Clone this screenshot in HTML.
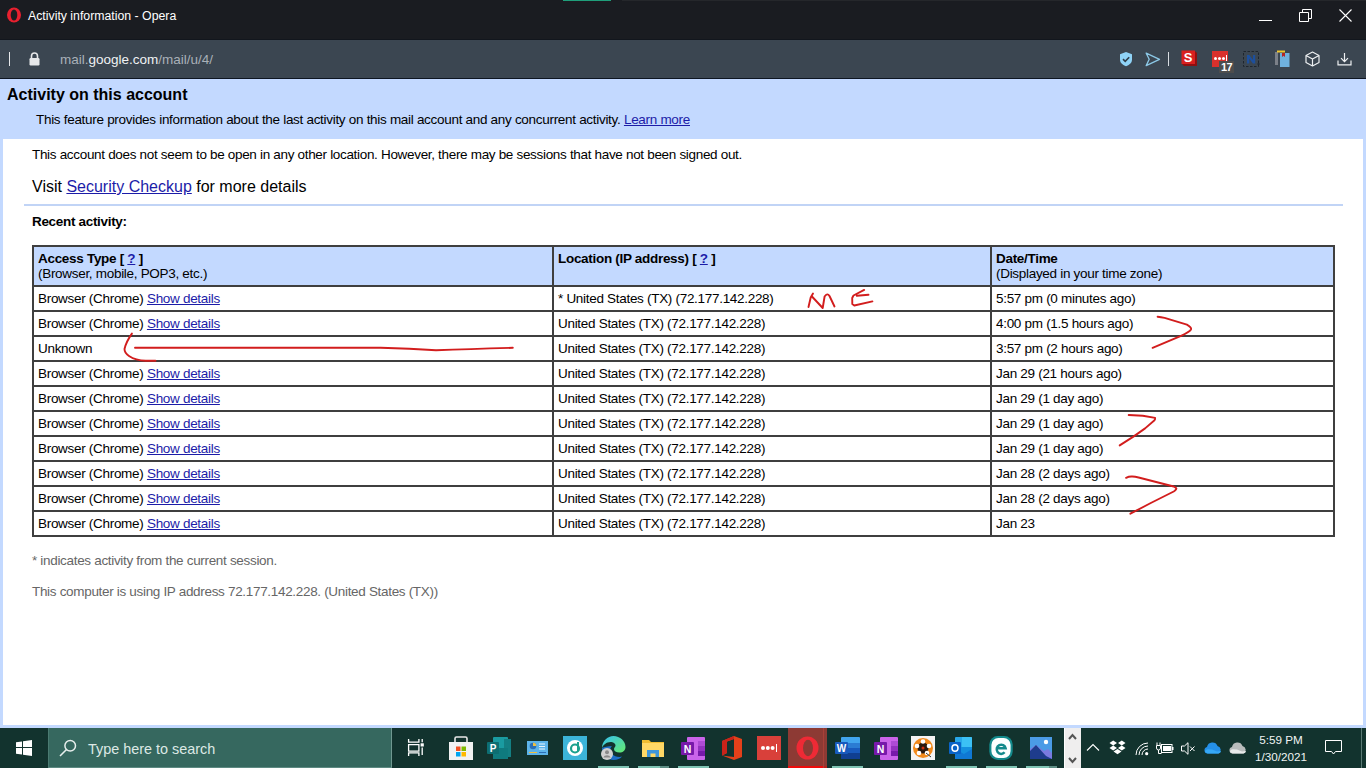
<!DOCTYPE html>
<html><head><meta charset="utf-8">
<style>
*{margin:0;padding:0;box-sizing:border-box}
html,body{width:1366px;height:768px;overflow:hidden;background:#c3d9ff;font-family:"Liberation Sans",sans-serif;position:relative}
.abs{position:absolute}
#title{left:0;top:0;width:1366px;height:40px;background:#1a1c21}
#title .t{left:28px;top:9px;font-size:12.3px;color:#fff;white-space:nowrap}
#tb{left:0;top:39px;width:1366px;height:40px;background:#3b4651;border-top:1px solid #12161d;border-bottom:1px solid #0e1622}
#url{left:60px;top:12px;font-size:13.5px;color:#a9b0b8;white-space:nowrap}
#url b{font-weight:normal;color:#f0f2f4}
#page{left:0;top:79px;width:1366px;height:649px;background:#c3d9ff}
#h1{left:7px;top:7px;font-size:16px;font-weight:bold;color:#000;white-space:nowrap}
#feat{left:36px;top:33px;font-size:13.5px;color:#000;letter-spacing:-0.30px;white-space:nowrap}
a{color:#1c1ca8;text-decoration:underline}
#white{left:3px;top:60px;width:1360px;height:586px;background:#fff}
.txt13{font-size:13.5px;letter-spacing:-0.32px;white-space:nowrap;color:#000}
#hr{left:21px;top:65px;width:1319px;height:2px;background:#c1d4f6}
table{position:absolute;left:29px;top:106px;width:1303px;border-collapse:collapse;font-size:13.5px;letter-spacing:-0.3px}
td,th{border:2px solid #3f3f3f;padding:0 4px;text-align:left;vertical-align:top;white-space:nowrap}
th{background:#c3d9ff;font-weight:normal;height:40px;padding-top:4px;line-height:15px}
td{height:25px;line-height:23px}
#taskbar{left:0;top:728px;width:1366px;height:40px;background:#12332e}
</style></head><body>
<div id="title" class="abs">
  <svg class="abs" style="left:6px;top:7px" width="16" height="16" viewBox="0 0 16 16"><ellipse cx="8" cy="8" rx="7" ry="7.6" fill="#e8202f"/><ellipse cx="8" cy="8" rx="3.3" ry="5.6" fill="#1b1d21"/></svg>
  <div class="abs t">Activity information - Opera</div>
  <div class="abs" style="left:563px;top:0;width:48px;height:1px;background:#1f9e7a"></div>
  <div class="abs" style="left:622px;top:0;width:744px;height:1px;background:#25272b"></div>
  <div class="abs" style="left:1259px;top:20px;width:13px;height:1px;background:#fff"></div>
  <svg class="abs" style="left:1299px;top:9px" width="14" height="13" viewBox="0 0 14 13"><path d="M0.5 3.5h9v9h-9z M3.5 3.5v-3h9v9h-3" fill="none" stroke="#fff" stroke-width="1"/></svg>
  <svg class="abs" style="left:1339px;top:9px" width="13" height="13" viewBox="0 0 13 13"><path d="M0.5 0.5L12.5 12.5M12.5 0.5L0.5 12.5" stroke="#fff" stroke-width="1.1"/></svg>
</div>
<div id="tb" class="abs">
  <div class="abs" style="left:9px;top:12px;width:1px;height:14px;background:#e6e8ea"></div>
  <svg class="abs" style="left:29px;top:12px" width="11" height="14" viewBox="0 0 11 14"><path d="M2.5 6.5V4a3 3 0 0 1 6 0v2.5" fill="none" stroke="#e6e8ea" stroke-width="1.6"/><rect x="0.5" y="6" width="10" height="7.5" rx="1.2" fill="#e6e8ea"/></svg>
  <svg class="abs" style="left:1119px;top:11px" width="14" height="16" viewBox="0 0 14 16"><path d="M7 1L13 3.2V8.5C13 12 10 14.3 7 15.2 4 14.3 1 12 1 8.5V3.2Z" fill="#8fd3f7"/><path d="M4 8.2L6.2 10.3 10.2 6.2" fill="none" stroke="#2f3e4a" stroke-width="1.6"/></svg>
  <svg class="abs" style="left:1145px;top:12px" width="16" height="15" viewBox="0 0 16 15"><path d="M1.2 1.2L14.5 7.3 1.2 13.6 4.2 7.3Z" fill="none" stroke="#8cc8e6" stroke-width="1.3" stroke-linejoin="round"/></svg>
  <div class="abs" style="left:1168px;top:12px;width:1px;height:14px;background:#d8dde2"></div>
  <svg class="abs" style="left:1181px;top:10px" width="17" height="17" viewBox="0 0 17 17"><path d="M1 1h13l2 2v13H3l-2-2z" fill="#8e1010"/><rect x="0.5" y="0.5" width="13.5" height="13.5" fill="#d9201f"/><text x="7.2" y="12" font-family="Liberation Sans" font-weight="bold" font-size="13" fill="#fff" text-anchor="middle">S</text></svg>
  <div class="abs" style="left:1212px;top:11px;width:16px;height:16px;background:#d9302c"></div>
  <div class="abs" style="left:1214px;top:17px;width:3px;height:3px;border-radius:50%;background:#fff;box-shadow:4px 0 0 #fff,8px 0 0 #fff"></div>
  <div class="abs" style="left:1226px;top:15px;width:1px;height:6px;background:#fff"></div>
  <div class="abs" style="left:1219px;top:21px;width:15px;height:12px;background:#4d4d4d;color:#fff;font-size:11px;font-weight:bold;line-height:12px;text-align:center;letter-spacing:-0.5px">17</div>
  <svg class="abs" style="left:1243px;top:11px" width="17" height="16" viewBox="0 0 17 16"><rect x="0.5" y="0.5" width="15" height="15" fill="none" stroke="#1e252d" stroke-width="1" stroke-dasharray="2.5 1.5"/><path d="M4 12.5V4h2.3l3.7 5V4h2.2v8.5H9.9L6.2 7.5V12.5z" fill="#1d4f9c"/><path d="M14 13h3M15.5 11.5v3" stroke="#222a33" stroke-width="0.8"/></svg>
  <svg class="abs" style="left:1275px;top:10px" width="15" height="17" viewBox="0 0 15 17"><rect x="0" y="2" width="3" height="13" fill="#7b8088"/><rect x="2" y="0.5" width="8" height="2" fill="#f0c630"/><rect x="5" y="3" width="9.5" height="14" fill="#6fb1de"/><path d="M7 3h3v4l-1.5-1.2L7 7z" fill="#b52424"/></svg>
  <svg class="abs" style="left:1305px;top:11px" width="15" height="16" viewBox="0 0 15 16"><path d="M7.5 1L14 4.5V11.5L7.5 15 1 11.5V4.5Z M1 4.5L7.5 8 14 4.5 M7.5 8V15" fill="none" stroke="#eef0f2" stroke-width="1.2" stroke-linejoin="round"/></svg>
  <svg class="abs" style="left:1337px;top:13px" width="15" height="13" viewBox="0 0 15 13"><path d="M7.5 0V8.5M4 5.2L7.5 8.7 11 5.2M1 7.5V11.9H14V7.5" fill="none" stroke="#eef0f2" stroke-width="1.2"/></svg>
  <div id="url" class="abs">mail.<b>google.com</b>/mail/u/4/</div>
</div>
<div id="page" class="abs">
  <div id="h1" class="abs">Activity on this account</div>
  <div id="feat" class="abs">This feature provides information about the last activity on this mail account and any concurrent activity. <a>Learn more</a></div>
  <div id="white" class="abs">
    <div class="abs txt13" style="left:29px;top:8px">This account does not seem to be open in any other location. However, there may be sessions that have not been signed out.</div>
    <div class="abs" style="left:29px;top:39px;font-size:16px;white-space:nowrap">Visit <a>Security Checkup</a> for more details</div>
    <div id="hr" class="abs"></div>
    <div class="abs txt13" style="left:29px;top:75px;font-weight:bold">Recent activity:</div>
    <table>
      <tr><th style="width:520px"><b>Access Type [ <a>?</a> ]</b><br>(Browser, mobile, POP3, etc.)</th><th style="width:438px"><b>Location (IP address) [ <a>?</a> ]</b></th><th><b>Date/Time</b><br>(Displayed in your time zone)</th></tr>
      <tr><td>Browser (Chrome) <a>Show details</a></td><td>* United States (TX) (72.177.142.228)</td><td>5:57 pm (0 minutes ago)</td></tr>
      <tr><td>Browser (Chrome) <a>Show details</a></td><td>United States (TX) (72.177.142.228)</td><td>4:00 pm (1.5 hours ago)</td></tr>
      <tr><td>Unknown</td><td>United States (TX) (72.177.142.228)</td><td>3:57 pm (2 hours ago)</td></tr>
      <tr><td>Browser (Chrome) <a>Show details</a></td><td>United States (TX) (72.177.142.228)</td><td>Jan 29 (21 hours ago)</td></tr>
      <tr><td>Browser (Chrome) <a>Show details</a></td><td>United States (TX) (72.177.142.228)</td><td>Jan 29 (1 day ago)</td></tr>
      <tr><td>Browser (Chrome) <a>Show details</a></td><td>United States (TX) (72.177.142.228)</td><td>Jan 29 (1 day ago)</td></tr>
      <tr><td>Browser (Chrome) <a>Show details</a></td><td>United States (TX) (72.177.142.228)</td><td>Jan 29 (1 day ago)</td></tr>
      <tr><td>Browser (Chrome) <a>Show details</a></td><td>United States (TX) (72.177.142.228)</td><td>Jan 28 (2 days ago)</td></tr>
      <tr><td>Browser (Chrome) <a>Show details</a></td><td>United States (TX) (72.177.142.228)</td><td>Jan 28 (2 days ago)</td></tr>
      <tr><td>Browser (Chrome) <a>Show details</a></td><td>United States (TX) (72.177.142.228)</td><td>Jan 23</td></tr>
    </table>
    <div class="abs txt13" style="left:29px;top:414px;color:#666">* indicates activity from the current session.</div>
    <div class="abs txt13" style="left:29px;top:445px;color:#666">This computer is using IP address 72.177.142.228. (United States (TX))</div>
  </div>
</div>
<svg class="abs" style="left:0;top:0;pointer-events:none" width="1366" height="768" viewBox="0 0 1366 768">
<g fill="none" stroke="#d21d1d" stroke-width="1.9" stroke-linecap="round" stroke-linejoin="round">
<path d="M808.5 307L810.7 297.5 813 293.5 M811.5 296L822.7 308 M822.7 308L824.6 296.5Q827.3 292.5 829.5 296L834.5 306.5"/>
<path d="M864.2 289.9L853.5 295.5 852.2 298 852.3 304 854.3 305.5 872.4 301.4 M856.9 295.8L868.5 294.8"/>
<path d="M131.9 333.6Q126 342 124.5 349 124.5 353 129 356 135.5 360.5 145.8 360.8L155.5 360.8"/>
<path d="M135 347.8L380.6 347.8Q410 348.5 436 350.3 470 349 512.8 347.8"/>
<path d="M1157.6 316.7Q1161 317.3 1164.6 317.9L1186.9 324.6Q1192 327.5 1191 329.5 1189.5 332 1181 335.8L1152.6 347.8"/>
<path d="M1128.7 415L1142.8 415.8 1155.1 417.9Q1155.3 419.5 1154.5 420.2L1145.1 428.4 1133.4 436.6 1119.7 445.4"/>
<path d="M1126.1 477.8Q1129 476.3 1132.2 476.5 1135 476.7 1138.6 477.5L1173.7 486.5Q1177 488 1176.2 489 1175.5 490.5 1173.7 491.5L1150.8 503 1130.4 513.7"/>
</g></svg>
<div id="taskbar" class="abs">
  <svg class="abs" style="left:16px;top:12px" width="16" height="16" viewBox="0 0 16 16"><path d="M0 2.3L6 1.4V7H0Z M7 1.2L16 0V7H7Z M0 8H6V14.6L0 13.7Z M7 8H16V16L7 14.8Z" fill="#fff"/></svg>
  <div class="abs" style="left:48px;top:0;width:344px;height:40px;background:#36685f;border-right:1px solid #6f9890;border-left:1px solid #4a7a71;border-bottom:1px solid #5d8a82"></div>
  <svg class="abs" style="left:59px;top:11px" width="18" height="18" viewBox="0 0 18 18"><circle cx="11.2" cy="6.8" r="5.3" fill="none" stroke="#e8efed" stroke-width="1.5"/><path d="M7.5 10.5L1 17" stroke="#e8efed" stroke-width="1.6"/></svg>
  <div class="abs" style="left:88px;top:12.5px;font-size:14.4px;color:#dde8e5;white-space:nowrap">Type here to search</div>
  <svg class="abs" style="left:407px;top:11px" width="18" height="17" viewBox="0 0 18 17"><path d="M1.6 0v3.2h10.3V0 M1.6 5.6h10.3v6.6H1.6z M1.6 17v-3.2h10.3V17 M15.2 0v3.2 M15.2 8.6V16" fill="none" stroke="#fff" stroke-width="1.3"/><rect x="13.6" y="4.3" width="3.2" height="3.2" fill="#fff"/></svg>
  <!-- store -->
  <svg class="abs" style="left:449px;top:8px" width="24" height="24" viewBox="0 0 24 24"><path d="M6 6V2.5Q6 1 7.5 1h9Q18 1 18 2.5V6" fill="none" stroke="#e8e8e8" stroke-width="1.6"/><rect x="0" y="6" width="24" height="18" fill="#f2f2f2"/><rect x="7" y="10.5" width="4.5" height="4.5" fill="#f25022"/><rect x="12.5" y="10.5" width="4.5" height="4.5" fill="#7fba00"/><rect x="7" y="16" width="4.5" height="4.5" fill="#00a4ef"/><rect x="12.5" y="16" width="4.5" height="4.5" fill="#ffb900"/></svg>
  <!-- publisher -->
  <svg class="abs" style="left:487px;top:9px" width="24" height="22" viewBox="0 0 24 22"><rect x="6" y="0" width="15" height="22" rx="1" fill="#1a9ba1"/><rect x="17" y="2" width="7" height="18" fill="#137f83"/><rect x="6" y="11" width="15" height="11" fill="#0f7a7e"/><rect x="0" y="5" width="12" height="12" rx="1" fill="#0d6e72"/><text x="6" y="15" font-family="Liberation Sans" font-weight="bold" font-size="10" fill="#fff" text-anchor="middle">P</text></svg>
  <!-- dashboard -->
  <svg class="abs" style="left:527px;top:13px" width="21" height="14" viewBox="0 0 21 14"><rect x="0" y="0" width="21" height="14" fill="#5db4ea"/><circle cx="6" cy="5" r="3.3" fill="#2c6fb5"/><path d="M6 5V1.7A3.3 3.3 0 0 1 9.3 5z" fill="#f0c040"/><path d="M12 3h6M12 5.5h6M12 8h6" stroke="#e8f4fc" stroke-width="1.2"/><path d="M2 11.5h8" stroke="#f0c040" stroke-width="1"/><path d="M12 11.5h7" stroke="#2c6fb5" stroke-width="1"/></svg>
  <!-- cyan app -->
  <svg class="abs" style="left:563px;top:8px" width="24" height="24" viewBox="0 0 24 24"><rect width="24" height="24" fill="#3cb4d9"/><circle cx="12" cy="12" r="8" fill="#fff"/><circle cx="12" cy="12.5" r="4" fill="none" stroke="#1aa08e" stroke-width="2.2"/><path d="M15 6v9" stroke="#1aa08e" stroke-width="2"/></svg>
  <!-- edge -->
  <svg class="abs" style="left:601px;top:8px" width="25" height="24" viewBox="0 0 25 24"><defs><linearGradient id="eg" x1="0" y1="0" x2="1" y2="1"><stop offset="0" stop-color="#35c1f1"/><stop offset="1" stop-color="#66eb6e"/></linearGradient></defs><path d="M1 12C1 5 6.5 0 12.5 0 19 0 24.5 5 24.5 11 24.5 14.5 22 16.5 18.5 16.5 15 16.5 13 15 13 13 13 11.5 14.5 11 14.5 9.5 14.5 7.5 12 6 9.5 6 5.5 6 2 9 1 12Z" fill="url(#eg)"/><path d="M1 12C1 18.5 6 24 12.5 24 16.5 24 19.5 22.5 21 20.5 18 21.5 13.5 20.5 11 18 8.5 15.5 9 12 11 10 7 10 3 11 1 12Z" fill="#1e6fc7"/><circle cx="6" cy="18" r="6" fill="#d0d0d0"/><circle cx="6" cy="16.3" r="2" fill="#8a8a8a"/><path d="M2.3 21.5A4 3.5 0 0 1 9.7 21.5" fill="#8a8a8a"/></svg>
  <div class="abs" style="left:598px;top:38px;width:31px;height:2px;background:#7fc4b4"></div>
  <!-- explorer -->
  <svg class="abs" style="left:642px;top:11px" width="22" height="18" viewBox="0 0 22 18"><path d="M0 1h7l2 2h13v15H0z" fill="#f0bd32"/><rect x="0" y="4" width="22" height="14" fill="#ffd866"/><path d="M5 18v-7h12v7h-3.5v-3.5h-5V18z" fill="#3f96db"/></svg>
  <div class="abs" style="left:638px;top:38px;width:22px;height:2px;background:#7fc4b4"></div>
  <div class="abs" style="left:660px;top:38px;width:9px;height:2px;background:#5e8e85"></div>
  <!-- onenote -->
  <svg class="abs" style="left:681px;top:9px" width="25" height="23" viewBox="0 0 25 23"><rect x="6" y="0" width="18" height="23" rx="1" fill="#ca64ea"/><rect x="17" y="4" width="7" height="5" fill="#ae4bd5"/><rect x="17" y="9" width="7" height="5" fill="#9332bf"/><rect x="17" y="14" width="7" height="5" fill="#7719aa"/><rect x="0" y="5" width="13" height="13" rx="1" fill="#7719aa"/><text x="6.5" y="15.5" font-family="Liberation Sans" font-weight="bold" font-size="10.5" fill="#fff" text-anchor="middle">N</text></svg>
  <div class="abs" style="left:678px;top:38px;width:31px;height:2px;background:#7fc4b4"></div>
  <!-- office -->
  <svg class="abs" style="left:722px;top:8px" width="20" height="24" viewBox="0 0 20 24"><path d="M0 5L12 0 20 3V21L12 24 0 19.5 12 21V3L5 5.5V17L0 19.5Z" fill="#e3401a"/><path d="M0 5L12 0V3L5 5.5V17L0 19.5Z" fill="#c9231a"/></svg>
  <!-- lastpass -->
  <div class="abs" style="left:757px;top:8px;width:24px;height:24px;background:#d9403a"></div>
  <div class="abs" style="left:761px;top:18px;width:4px;height:4px;border-radius:50%;background:#fff;box-shadow:4.8px 0 0 #fff,9.6px 0 0 #fff"></div>
  <div class="abs" style="left:776px;top:16px;width:1px;height:8px;background:#fff"></div>
  <!-- opera active -->
  <div class="abs" style="left:788px;top:0;width:39px;height:40px;background:#8d3a34"></div>
  <div class="abs" style="left:823px;top:0;width:1px;height:40px;background:#a84038"></div>
  <div class="abs" style="left:788px;top:38px;width:35px;height:2px;background:#ee0b0b"></div>
  <div class="abs" style="left:824px;top:38px;width:3px;height:2px;background:#b8221c"></div>
  <svg class="abs" style="left:796px;top:8px" width="23" height="24" viewBox="0 0 23 24"><ellipse cx="11.5" cy="12" rx="11" ry="11.5" fill="#ee2a35"/><ellipse cx="12" cy="12" rx="5" ry="8.3" fill="#8d3a34"/></svg>
  <!-- word -->
  <svg class="abs" style="left:835px;top:9px" width="25" height="22" viewBox="0 0 25 22"><rect x="6" y="0" width="19" height="22" rx="1" fill="#41a5ee"/><rect x="6" y="6" width="19" height="5" fill="#2b7cd3"/><rect x="6" y="11" width="19" height="5" fill="#185abd"/><rect x="6" y="16" width="19" height="6" fill="#103f91"/><rect x="0" y="5" width="13" height="12" rx="1" fill="#185abd"/><text x="6.5" y="15" font-family="Liberation Sans" font-weight="bold" font-size="10" fill="#fff" text-anchor="middle">W</text></svg>
  <div class="abs" style="left:832px;top:38px;width:31px;height:2px;background:#7fc4b4"></div>
  <!-- onenote 2 -->
  <svg class="abs" style="left:874px;top:9px" width="25" height="23" viewBox="0 0 25 23"><rect x="6" y="0" width="18" height="23" rx="1" fill="#ca64ea"/><rect x="17" y="4" width="7" height="5" fill="#ae4bd5"/><rect x="17" y="9" width="7" height="5" fill="#9332bf"/><rect x="17" y="14" width="7" height="5" fill="#7719aa"/><rect x="0" y="5" width="13" height="13" rx="1" fill="#7719aa"/><text x="6.5" y="15.5" font-family="Liberation Sans" font-weight="bold" font-size="10.5" fill="#fff" text-anchor="middle">N</text></svg>
  <!-- film -->
  <svg class="abs" style="left:911px;top:8px" width="24" height="24" viewBox="0 0 24 24"><rect width="24" height="24" fill="#f4f4f4"/><circle cx="12" cy="12" r="10" fill="#f28a1c"/><circle cx="12" cy="12" r="5.5" fill="#2a1a10"/><circle cx="12" cy="5.5" r="2.3" fill="#fff"/><circle cx="6" cy="10" r="2.3" fill="#fff"/><circle cx="18" cy="10" r="2.3" fill="#fff"/><circle cx="8" cy="17" r="2.3" fill="#fff"/><circle cx="16" cy="17" r="2.3" fill="#fff"/><circle cx="12" cy="12" r="1.5" fill="#d03010"/><path d="M15 17l5 4" stroke="#333" stroke-width="1"/></svg>
  <!-- outlook -->
  <svg class="abs" style="left:949px;top:9px" width="24" height="22" viewBox="0 0 24 22"><rect x="6" y="0" width="17" height="22" rx="1" fill="#28a8ea"/><rect x="13" y="0" width="10" height="10" fill="#50d9ff" opacity="0.5"/><path d="M6 10L23 10V22H6z" fill="#1490df"/><path d="M6 12L15 17 23 12V22H6z" fill="#0f78d4"/><rect x="0" y="5" width="12" height="12" rx="1" fill="#0a64c8"/><ellipse cx="6" cy="11" rx="3" ry="3.3" fill="none" stroke="#fff" stroke-width="1.5"/></svg>
  <div class="abs" style="left:946px;top:38px;width:31px;height:2px;background:#7fc4b4"></div>
  <!-- eset -->
  <svg class="abs" style="left:989px;top:8px" width="24" height="24" viewBox="0 0 24 24"><rect x="0.3" y="0" width="23.4" height="24" rx="8.5" fill="#138a8c"/><rect x="2.4" y="2" width="19.2" height="20" rx="7" fill="#fbffff"/><path d="M7.6 12.3H16.6A4.5 4.6 0 1 0 15.6 16.3" fill="none" stroke="#138a8c" stroke-width="2.5"/></svg>
  <div class="abs" style="left:986px;top:38px;width:31px;height:2px;background:#7fc4b4"></div>
  <!-- photos -->
  <svg class="abs" style="left:1030px;top:9px" width="22" height="22" viewBox="0 0 22 22"><rect width="22" height="22" fill="#4b9be6"/><path d="M0 12L6 8 14 14 18 12 22 16V22H0z" fill="#7a7ae0"/><path d="M0 14L6 8 16 19 22 22H0z" fill="#1e3c8c"/><circle cx="16" cy="5" r="2.2" fill="#fff"/></svg>
  <div class="abs" style="left:1026px;top:38px;width:23px;height:2px;background:#7fc4b4"></div>
  <div class="abs" style="left:1049px;top:38px;width:8px;height:2px;background:#5e8e85"></div>
  <!-- scroll strip -->
  <div class="abs" style="left:1064px;top:0;width:17px;height:40px;background:#efeeee;border-left:1px solid #fff"></div>
  <svg class="abs" style="left:1068px;top:5px" width="9" height="7" viewBox="0 0 9 7"><path d="M1 6L4.5 2 8 6" fill="none" stroke="#555" stroke-width="2"/></svg>
  <svg class="abs" style="left:1068px;top:29px" width="9" height="7" viewBox="0 0 9 7"><path d="M1 1L4.5 5 8 1" fill="none" stroke="#555" stroke-width="2"/></svg>
  <!-- tray -->
  <svg class="abs" style="left:1086px;top:15px" width="14" height="8" viewBox="0 0 14 8"><path d="M1 7.5L7 1.5 13 7.5" fill="none" stroke="#fff" stroke-width="1.1"/></svg>
  <svg class="abs" style="left:1109px;top:12px" width="17" height="15" viewBox="0 0 17 15"><path d="M4.2 0.5L0.5 3 4.2 5.5 8 3ZM12.8 0.5L9 3 12.8 5.5 16.5 3ZM0.5 8L4.2 10.5 8 8 4.2 5.5ZM9 8L12.8 10.5 16.5 8 12.8 5.5ZM4.5 11.5L8.5 14.2 12.5 11.5 8.5 9Z" fill="#fff"/></svg>
  <svg class="abs" style="left:1135px;top:14px" width="14" height="14" viewBox="0 0 14 14"><path d="M1 13A12 12 0 0 1 13 1 M4 13A9 9 0 0 1 13 4 M7 13A6 6 0 0 1 13 7" fill="none" stroke="#fff" stroke-width="1"/><circle cx="11.7" cy="11.7" r="1.6" fill="#fff"/></svg>
  <svg class="abs" style="left:1156px;top:14px" width="18" height="12" viewBox="0 0 18 12"><path d="M1 0.5v3M4 0.5v3M0.5 3.5h4v2.5a2 2 0 0 1-4 0z M2.5 8v3.5h3" fill="none" stroke="#fff" stroke-width="1"/><rect x="5.5" y="2.5" width="10.5" height="8" fill="none" stroke="#fff" stroke-width="1"/><rect x="7" y="4" width="8" height="5" fill="#fff"/><rect x="16" y="5" width="1.5" height="3" fill="#fff"/></svg>
  <svg class="abs" style="left:1181px;top:14px" width="15" height="13" viewBox="0 0 15 13"><path d="M0.5 4h3L7 0.7V12.3L3.5 9h-3z" fill="none" stroke="#fff" stroke-width="1"/><path d="M9 4.5l4.5 4.5M13.5 4.5L9 9" stroke="#fff" stroke-width="1"/></svg>
  <svg class="abs" style="left:1204px;top:14px" width="18" height="12" viewBox="0 0 18 12"><path d="M3.5 11.5A3.3 3.3 0 0 1 3 5 5.5 5.5 0 0 1 13.5 4 4 4 0 0 1 14.5 11.5Z" fill="#2590e8"/><path d="M1 10A3 3 0 0 1 4 7.3L8 7.5 13 9.5 17 9A3 3 0 0 1 14.5 11.5H3.5Z" fill="#36a8f5"/></svg>
  <svg class="abs" style="left:1229px;top:14px" width="18" height="12" viewBox="0 0 18 12"><path d="M3.5 11.5A3.3 3.3 0 0 1 3 5 5.5 5.5 0 0 1 13.5 4 4 4 0 0 1 14.5 11.5Z" fill="#b8bcbc"/><path d="M1 10A3 3 0 0 1 4 7.3L8 7.5 13 9.5 17 9A3 3 0 0 1 14.5 11.5H3.5Z" fill="#e8eaea"/></svg>
  <div class="abs" style="left:1255px;top:3px;width:52px;text-align:center;font-size:11.7px;line-height:17px;color:#f0f4f3;white-space:nowrap">5:59 PM<br>1/30/2021</div>
  <svg class="abs" style="left:1325px;top:12px" width="17" height="17" viewBox="0 0 17 17"><path d="M0.5 0.5h16v11H10.5L8.5 14 6.5 11.5H0.5z" fill="none" stroke="#fff" stroke-width="1"/></svg>
  <div class="abs" style="left:1361px;top:0;width:1px;height:40px;background:#5a7a74"></div>
</div>
</body></html>
